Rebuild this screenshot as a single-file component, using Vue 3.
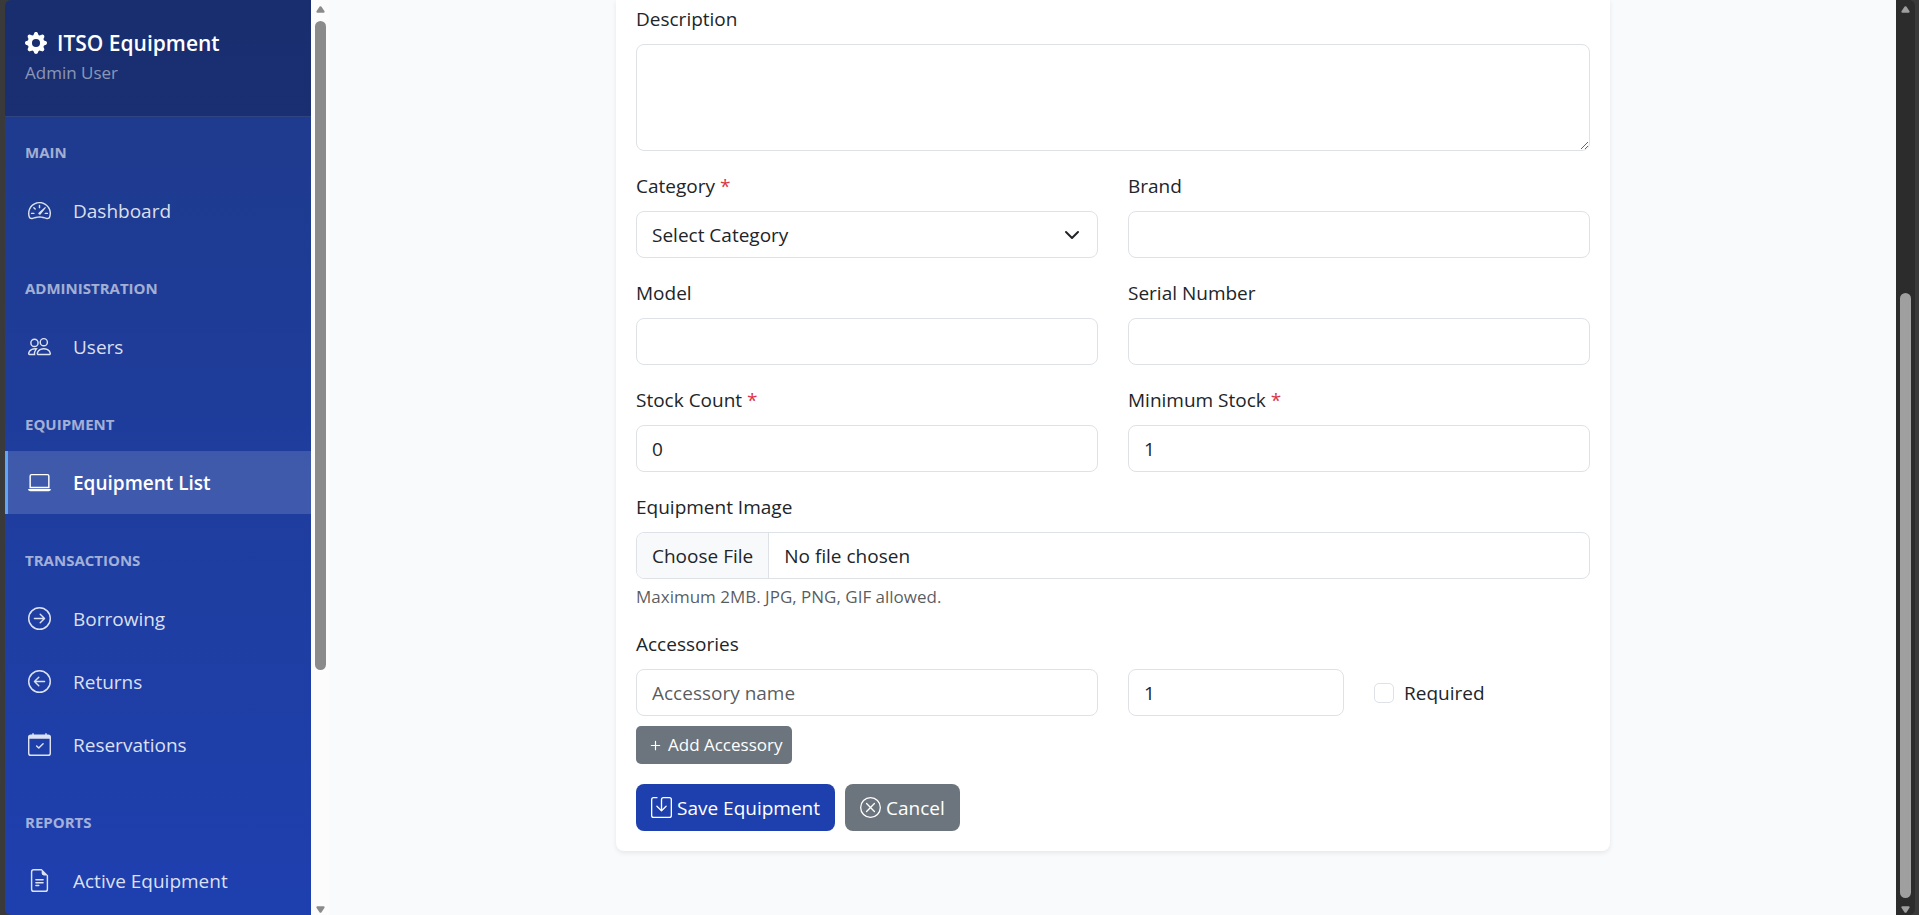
<template>
  <div class="app-shell">
    <aside class="sidebar">
      <div class="sidebar-header">
        <h1 class="brand">
          <svg class="brand-icon" viewBox="0 0 16 16" aria-hidden="true"><path :d="icons.gear" /></svg>
          <span>ITSO Equipment</span>
        </h1>
        <p class="user-name">Admin User</p>
      </div>
      <nav class="sidebar-nav">
        <div v-for="section in sections" :key="section.title" class="nav-section">
          <h2 class="nav-title">{{ section.title }}</h2>
          <a
            v-for="item in section.items"
            :key="item.label"
            href="#"
            class="nav-item"
            :class="{ active: activeItem === item.label }"
            @click.prevent="activeItem = item.label"
          >
            <svg class="nav-icon" viewBox="0 0 16 16" aria-hidden="true">
              <path fill-rule="evenodd" :d="icons[item.icon]" />
            </svg>
            <span>{{ item.label }}</span>
          </a>
        </div>
      </nav>
    </aside>

    <div class="scrollbar" aria-hidden="true">
      <svg class="scroll-arrow" viewBox="0 0 10 8"><path :d="icons.up" /></svg>
      <div class="scroll-track sidebar-track"><div class="scroll-thumb"></div></div>
      <svg class="scroll-arrow" viewBox="0 0 10 8"><path :d="icons.down" /></svg>
    </div>

    <main class="content">
      <div class="content-col">
        <form class="card" @submit.prevent>
          <div class="field">
            <label for="description">Description</label>
            <textarea id="description" v-model="form.description" class="control"></textarea>
          </div>

          <div class="row">
            <div class="field">
              <label for="category">Category <span class="required">*</span></label>
              <div class="select-wrap">
                <select id="category" v-model="form.category" class="control">
                  <option value="">Select Category</option>
                </select>
                <svg class="chevron" viewBox="0 0 16 16" aria-hidden="true"><path d="m2 5 6 6 6-6" /></svg>
              </div>
            </div>
            <div class="field">
              <label for="brand">Brand</label>
              <input id="brand" v-model="form.brand" type="text" class="control">
            </div>
          </div>

          <div class="row">
            <div class="field">
              <label for="model">Model</label>
              <input id="model" v-model="form.model" type="text" class="control">
            </div>
            <div class="field">
              <label for="serial">Serial Number</label>
              <input id="serial" v-model="form.serial" type="text" class="control">
            </div>
          </div>

          <div class="row">
            <div class="field">
              <label for="stock">Stock Count <span class="required">*</span></label>
              <input id="stock" v-model="form.stock" type="number" min="0" class="control">
            </div>
            <div class="field">
              <label for="minStock">Minimum Stock <span class="required">*</span></label>
              <input id="minStock" v-model="form.minStock" type="number" min="0" class="control">
            </div>
          </div>

          <div class="field">
            <label for="image">Equipment Image</label>
            <input id="image" type="file" accept=".jpg,.png,.gif" class="control">
            <small class="help">Maximum 2MB. JPG, PNG, GIF allowed.</small>
          </div>

          <div class="field">
            <label for="accessory-0">Accessories</label>
            <div v-for="(item, index) in accessories" :key="index" class="row accessory">
              <input
                :id="'accessory-' + index"
                v-model="item.name"
                type="text"
                class="control"
                placeholder="Accessory name"
              >
              <div class="accessory-options">
                <input v-model="item.quantity" type="number" min="1" class="control" aria-label="Quantity">
                <label class="check">
                  <input v-model="item.required" type="checkbox">
                  <span>Required</span>
                </label>
              </div>
            </div>
            <button type="button" class="btn btn-sm btn-secondary" @click="addAccessory">
              <svg viewBox="0 0 16 16" aria-hidden="true"><path :d="icons.plus" /></svg>
              Add Accessory
            </button>
          </div>

          <div class="actions">
            <button type="submit" class="btn btn-primary">
              <svg viewBox="0 0 16 16" aria-hidden="true"><path :d="icons.save" /></svg>
              Save Equipment
            </button>
            <a href="#" class="btn btn-secondary">
              <svg viewBox="0 0 16 16" aria-hidden="true"><path fill-rule="evenodd" :d="icons.cancel" /></svg>
              Cancel
            </a>
          </div>
        </form>
      </div>
    </main>

    <div class="scrollbar dark" aria-hidden="true">
      <svg class="scroll-arrow" viewBox="0 0 10 8"><path :d="icons.up" /></svg>
      <div class="scroll-track page-track"><div class="scroll-thumb"></div></div>
      <svg class="scroll-arrow" viewBox="0 0 10 8"><path :d="icons.down" /></svg>
    </div>
  </div>
</template>

<script setup>
import { reactive, ref } from 'vue'

const activeItem = ref('Equipment List')

const sections = [
  { title: 'MAIN', items: [{ label: 'Dashboard', icon: 'speedometer' }] },
  { title: 'ADMINISTRATION', items: [{ label: 'Users', icon: 'people' }] },
  { title: 'EQUIPMENT', items: [{ label: 'Equipment List', icon: 'laptop' }] },
  {
    title: 'TRANSACTIONS',
    items: [
      { label: 'Borrowing', icon: 'arrowRight' },
      { label: 'Returns', icon: 'arrowLeft' },
      { label: 'Reservations', icon: 'calendar' }
    ]
  },
  { title: 'REPORTS', items: [{ label: 'Active Equipment', icon: 'file' }] }
]

const form = reactive({
  description: '',
  category: '',
  brand: '',
  model: '',
  serial: '',
  stock: 0,
  minStock: 1
})

const accessories = ref([{ name: '', quantity: 1, required: false }])

const addAccessory = () => {
  accessories.value.push({ name: '', quantity: 1, required: false })
}

const icons = {
  gear: 'M9.405 1.05c-.413-1.4-2.397-1.4-2.81 0l-.1.34a1.464 1.464 0 0 1-2.105.872l-.31-.17c-1.283-.698-2.686.705-1.987 1.987l.169.311c.446.82.023 1.841-.872 2.105l-.34.1c-1.4.413-1.4 2.397 0 2.81l.34.1a1.464 1.464 0 0 1 .872 2.105l-.17.31c-.698 1.283.705 2.686 1.987 1.987l.311-.169a1.464 1.464 0 0 1 2.105.872l.1.34c.413 1.4 2.397 1.4 2.81 0l.1-.34a1.464 1.464 0 0 1 2.105-.872l.31.17c1.283.698 2.686-.705 1.987-1.987l-.169-.311a1.464 1.464 0 0 1 .872-2.105l.34-.1c1.4-.413 1.4-2.397 0-2.81l-.34-.1a1.464 1.464 0 0 1-.872-2.105l.17-.31c.698-1.283-.705-2.686-1.987-1.987l-.311.169a1.464 1.464 0 0 1-2.105-.872zM8 10.93a2.929 2.929 0 1 1 0-5.86 2.929 2.929 0 0 1 0 5.858z',
  speedometer: 'M8 4a.5.5 0 0 1 .5.5V6a.5.5 0 0 1-1 0V4.5A.5.5 0 0 1 8 4M3.732 5.732a.5.5 0 0 1 .707 0l.915.914a.5.5 0 1 1-.708.708l-.914-.915a.5.5 0 0 1 0-.707M2 10a.5.5 0 0 1 .5-.5h1.586a.5.5 0 0 1 0 1H2.5A.5.5 0 0 1 2 10m9.5 0a.5.5 0 0 1 .5-.5h1.5a.5.5 0 0 1 0 1H12a.5.5 0 0 1-.5-.5m.754-4.246a.39.39 0 0 0-.527-.02L7.547 9.31a.91.91 0 1 0 1.302 1.258l3.434-4.297a.39.39 0 0 0-.029-.518zM0 10a8 8 0 1 1 15.547 2.661c-.442 1.253-1.845 1.602-2.932 1.25C11.309 13.488 9.475 13 8 13c-1.474 0-3.31.488-4.615.911-1.087.352-2.49.003-2.932-1.25A8 8 0 0 1 0 10m8-7a7 7 0 0 0-6.603 9.329c.203.575.923.876 1.68.63C4.397 12.533 6.358 12 8 12s3.604.532 4.923.96c.757.245 1.477-.056 1.68-.631A7 7 0 0 0 8 3',
  people: 'M15 14s1 0 1-1-1-4-5-4-5 3-5 4 1 1 1 1zm-7.978-1L7 12.996c.001-.264.167-1.03.76-1.72C8.312 10.629 9.282 10 11 10c1.717 0 2.687.63 3.24 1.276.593.69.758 1.457.76 1.72l-.008.002-.014.002zM11 7a2 2 0 1 0 0-4 2 2 0 0 0 0 4m3-2a3 3 0 1 1-6 0 3 3 0 0 1 6 0M6.936 9.28a6 6 0 0 0-1.23-.247A7 7 0 0 0 5 9c-4 0-5 3-5 4q0 1 1 1h4.216A2.24 2.24 0 0 1 5 13c0-1.01.377-2.042 1.09-2.904.243-.294.526-.569.846-.816M4.92 10A5.5 5.5 0 0 0 4 13H1c0-.26.164-1.03.76-1.724.545-.636 1.492-1.256 3.16-1.275zM1.5 5.5a3 3 0 1 1 6 0 3 3 0 0 1-6 0m3-2a2 2 0 1 0 0 4 2 2 0 0 0 0-4',
  laptop: 'M13.5 3a.5.5 0 0 1 .5.5V11H2V3.5a.5.5 0 0 1 .5-.5zm-11-1A1.5 1.5 0 0 0 1 3.5V12h14V3.5A1.5 1.5 0 0 0 13.5 2zM0 12.5h16a1.5 1.5 0 0 1-1.5 1.5h-13A1.5 1.5 0 0 1 0 12.5',
  arrowRight: 'M1 8a7 7 0 1 0 14 0A7 7 0 0 0 1 8m15 0A8 8 0 1 1 0 8a8 8 0 0 1 16 0M4.5 7.5a.5.5 0 0 0 0 1h5.793l-2.147 2.146a.5.5 0 0 0 .708.708l3-3a.5.5 0 0 0 0-.708l-3-3a.5.5 0 1 0-.708.708L10.293 7.5z',
  arrowLeft: 'M1 8a7 7 0 1 0 14 0A7 7 0 0 0 1 8m15 0A8 8 0 1 1 0 8a8 8 0 0 1 16 0m-4.5-.5a.5.5 0 0 1 0 1H5.707l2.147 2.146a.5.5 0 0 1-.708.708l-3-3a.5.5 0 0 1 0-.708l3-3a.5.5 0 1 1 .708.708L5.707 7.5z',
  calendar: 'M10.854 7.146a.5.5 0 0 1 0 .708l-3 3a.5.5 0 0 1-.708 0l-1.5-1.5a.5.5 0 1 1 .708-.708L7.5 9.793l2.646-2.647a.5.5 0 0 1 .708 0M3.5 0a.5.5 0 0 1 .5.5V1h8V.5a.5.5 0 0 1 1 0V1h1a2 2 0 0 1 2 2v11a2 2 0 0 1-2 2H2a2 2 0 0 1-2-2V3a2 2 0 0 1 2-2h1V.5a.5.5 0 0 1 .5-.5M1 4v10a1 1 0 0 0 1 1h12a1 1 0 0 0 1-1V4z',
  file: 'M5.5 7a.5.5 0 0 0 0 1h5a.5.5 0 0 0 0-1zM5 9.5a.5.5 0 0 1 .5-.5h5a.5.5 0 0 1 0 1h-5a.5.5 0 0 1-.5-.5m0 2a.5.5 0 0 1 .5-.5h2a.5.5 0 0 1 0 1h-2a.5.5 0 0 1-.5-.5M9.5 0H4a2 2 0 0 0-2 2v12a2 2 0 0 0 2 2h8a2 2 0 0 0 2-2V4.5zm0 1v2A1.5 1.5 0 0 0 11 4.5h2V14a1 1 0 0 1-1 1H4a1 1 0 0 1-1-1V2a1 1 0 0 1 1-1z',
  plus: 'M8 4a.5.5 0 0 1 .5.5v3h3a.5.5 0 0 1 0 1h-3v3a.5.5 0 0 1-1 0v-3h-3a.5.5 0 0 1 0-1h3v-3A.5.5 0 0 1 8 4',
  save: 'M2 1a1 1 0 0 0-1 1v12a1 1 0 0 0 1 1h12a1 1 0 0 0 1-1V2a1 1 0 0 0-1-1H9.5a1 1 0 0 0-1 1v7.293l2.646-2.647a.5.5 0 0 1 .708.708l-3.5 3.5a.5.5 0 0 1-.708 0l-3.5-3.5a.5.5 0 1 1 .708-.708L7.5 9.293V2a2 2 0 0 1 2-2H14a2 2 0 0 1 2 2v12a2 2 0 0 1-2 2H2a2 2 0 0 1-2-2V2a2 2 0 0 1 2-2h2.5a.5.5 0 0 1 0 1z',
  cancel: 'M8 15A7 7 0 1 1 8 1a7 7 0 0 1 0 14m0 1A8 8 0 1 0 8 0a8 8 0 0 0 0 16M4.646 4.646a.5.5 0 0 1 .708 0L8 7.293l2.646-2.647a.5.5 0 0 1 .708.708L8.707 8l2.647 2.646a.5.5 0 0 1-.708.708L8 8.707l-2.646 2.647a.5.5 0 0 1-.708-.708L7.293 8 4.646 5.354a.5.5 0 0 1 0-.708',
  up: 'M4 .7Q5-.3 6 .7L9.6 6Q10 7.6 8.6 7.6H1.4Q0 7.6.4 6z',
  down: 'M4 7.3Q5 8.3 6 7.3L9.6 2Q10 .4 8.6 .4H1.4Q0 .4.4 2z'
}
</script>

<style>
body {
  margin: 0;
  background: #3a3a3a;
}
</style>

<style scoped>
* {
  box-sizing: border-box;
}

.app-shell {
  display: flex;
  height: 100vh;
  padding: 0 4px 0 5px;
  overflow: hidden;
  color: #212529;
  font-family: "Segoe UI", "Open Sans", "Noto Sans", sans-serif;
  font-size: 19px;
  line-height: 30px;
}

svg {
  display: block;
  flex: none;
  fill: currentColor;
}

/* Sidebar */
.sidebar {
  flex: 0 0 306px;
  overflow: hidden;
  border-radius: 6px 0 0 6px;
  background: linear-gradient(180deg, #1e3a8a 0%, #1e40af 100%);
  color: white;
}

.sidebar-header {
  height: 117px;
  padding: 28px 20px 0;
  background: rgba(0, 0, 0, 0.2);
  border-bottom: 1px solid rgba(255, 255, 255, 0.1);
}

.brand {
  display: flex;
  align-items: center;
  gap: 10px;
  margin: 0;
  font-size: 21px;
  font-weight: 600;
}

.brand-icon {
  width: 22px;
  height: 22px;
}

.user-name {
  margin: 0;
  color: rgba(255, 255, 255, 0.5);
  font-size: 17px;
}

.nav-section {
  margin-bottom: 11px;
}

.nav-title {
  margin: 0;
  padding: 25px 20px 17px;
  color: rgba(255, 255, 255, 0.6);
  font-size: 15px;
  font-weight: 700;
  line-height: 20px;
}

.nav-item {
  display: flex;
  align-items: center;
  gap: 22px;
  height: 63px;
  padding-left: 20px;
  border-left: 3px solid transparent;
  color: rgba(255, 255, 255, 0.85);
  text-decoration: none;
}

.nav-item.active {
  border-left-color: #60a5fa;
  background: rgba(255, 255, 255, 0.15);
  color: white;
  font-weight: 600;
}

.nav-icon {
  width: 23px;
  height: 23px;
}

/* Scrollbars */
.scrollbar {
  display: flex;
  flex: 0 0 19px;
  flex-direction: column;
  align-items: center;
  gap: 8px;
  padding: 6px 0 2px;
  background: #fcfcfc;
  color: #8b8b8b;
}

.scrollbar.dark {
  border-radius: 0 6px 6px 0;
  background: #2c2c2c;
  color: #9f9f9f;
}

.scroll-arrow {
  width: 9px;
  height: 7px;
}

.scroll-track {
  display: flex;
  flex: 1;
  flex-direction: column;
}

.scroll-thumb {
  width: 11px;
  border-radius: 6px;
  background: currentColor;
}

.sidebar-track .scroll-thumb {
  height: 74%;
}

.page-track {
  justify-content: flex-end;
}

.page-track .scroll-thumb {
  height: 69%;
}

/* Form */
.content {
  display: flex;
  flex: 1;
  align-items: flex-start;
  justify-content: center;
  min-width: 0;
  height: 100%;
  padding: 0 15px;
  background: #f8fafc;
}

.content-col {
  flex: 0 0 66.6667%;
  padding: 0 15px;
}

.card {
  display: flex;
  flex-direction: column;
  gap: 20px;
  padding: 4px 20px 20px;
  border-radius: 0 0 8px 8px;
  background: white;
  box-shadow: 0 2px 5px rgba(0, 0, 0, 0.08);
}

.row {
  display: grid;
  grid-template-columns: 1fr 1fr;
  gap: 30px;
}

.field > label {
  display: block;
  margin-bottom: 10px;
}

.required {
  color: #dc3545;
}

.control {
  display: block;
  width: 100%;
  height: 47px;
  margin: 0;
  padding: 7px 15px;
  border: 1px solid #dee2e6;
  border-radius: 8px;
  background: white;
  color: #212529;
  font: inherit;
  appearance: none;
}

.control::placeholder {
  color: rgba(33, 37, 41, 0.75);
  opacity: 1;
}

.control:focus {
  border-color: #1e40af;
  outline: none;
}

textarea.control {
  height: 107px;
  resize: vertical;
}

input[type="number"] {
  appearance: textfield;
}

input[type="file"] {
  overflow: hidden;
}

input[type="file"]::file-selector-button {
  height: 45px;
  margin: -7px 15px -7px -15px;
  padding: 7px 15px;
  border: 0 solid #dee2e6;
  border-right-width: 1px;
  background: #f8f9fa;
  color: #212529;
  font: inherit;
}

.select-wrap {
  position: relative;
}

.chevron {
  position: absolute;
  top: 16px;
  right: 18px;
  width: 16px;
  height: 16px;
  fill: none;
  stroke: #212529;
  stroke-width: 2;
  stroke-linecap: round;
  stroke-linejoin: round;
  pointer-events: none;
}

.help {
  display: block;
  margin-top: 5px;
  color: rgba(33, 37, 41, 0.75);
  font-size: 17px;
  line-height: 25px;
}

.accessory {
  margin-bottom: 10px;
}

.accessory-options {
  display: grid;
  grid-template-columns: 1fr 1fr;
  gap: 30px;
  align-items: center;
}

.check {
  display: flex;
  align-items: center;
  gap: 10px;
}

.check input {
  width: 20px;
  height: 20px;
  margin: 0;
  border: 1px solid #dee2e6;
  border-radius: 5px;
  background: white;
  appearance: none;
}

.check input:checked {
  background: #1e40af;
}

.actions {
  display: flex;
  gap: 10px;
}

.btn {
  display: flex;
  align-items: center;
  gap: 5px;
  height: 47px;
  padding: 0 15px;
  border: none;
  border-radius: 8px;
  color: white;
  font: inherit;
  text-decoration: none;
  cursor: pointer;
}

.btn svg {
  width: 21px;
  height: 21px;
}

.btn-sm {
  gap: 3px;
  height: 38px;
  padding: 0 10px;
  border-radius: 5px;
  font-size: 17px;
}

.btn-sm svg {
  width: 19px;
  height: 19px;
}

.btn-primary {
  background: #1e40af;
}

.btn-secondary {
  background: #6c757d;
}
</style>
